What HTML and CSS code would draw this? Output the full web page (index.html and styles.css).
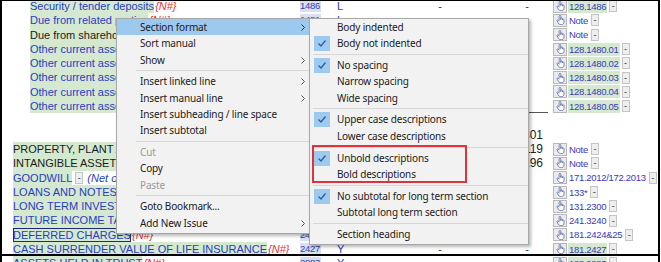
FILE: index.html
```html
<!DOCTYPE html>
<html>
<head>
<meta charset="utf-8">
<link rel="stylesheet" href="styles.css">
</head>
<body>
<div class="frame">
  <div class="sheet">
    <div class="row sub">
      <div class="desc"><span class="lbl">Security / tender deposits</span><span class="nf">{N#}</span></div>
      <div class="code"><span class="cd">1486</span></div>
      <div class="type">L</div>
      <div class="d1">-</div>
      <div class="amt"><span class="dash">-</span></div>
      <div class="ref"><span class="hb"><svg viewBox="0 0 10 11" width="9" height="10"><path d="M3.5 6V1.3a.9.9 0 0 1 1.8 0V5M5.3 5V4.2a.9.9 0 0 1 1.8 0V5.5M7.1 5.3a.9.9 0 0 1 1.8 0V8c0 1.6-1.2 2.6-2.8 2.6H5.2c-1.2 0-2-.6-2.6-1.6L1.2 6.6a.8.8 0 0 1 1.3-.9L3.5 7" fill="#fff" stroke="#5566aa" stroke-width=".9"/></svg></span><span class="rl g">128.1486</span><span class="dd">-</span></div>
    </div>
    <div class="row sub">
      <div class="desc"><span class="lbl">Due from related parties</span><span class="nf">{N#}</span></div>
      <div class="code"><span class="cd">1481</span></div><div class="type">L</div><div class="d1">-</div><div class="amt"></div>
      <div class="ref"><span class="hb"><svg viewBox="0 0 10 11" width="9" height="10"><path d="M3.5 6V1.3a.9.9 0 0 1 1.8 0V5M5.3 5V4.2a.9.9 0 0 1 1.8 0V5.5M7.1 5.3a.9.9 0 0 1 1.8 0V8c0 1.6-1.2 2.6-2.8 2.6H5.2c-1.2 0-2-.6-2.6-1.6L1.2 6.6a.8.8 0 0 1 1.3-.9L3.5 7" fill="#fff" stroke="#5566aa" stroke-width=".9"/></svg></span><span class="rl">Note</span><span class="dd">-</span></div>
    </div>
    <div class="row sub dark">
      <div class="desc"><span class="lbl">Due from shareholders</span></div>
      <div class="code"></div><div class="type"></div><div class="d1"></div><div class="amt"></div>
      <div class="ref"><span class="hb"><svg viewBox="0 0 10 11" width="9" height="10"><path d="M3.5 6V1.3a.9.9 0 0 1 1.8 0V5M5.3 5V4.2a.9.9 0 0 1 1.8 0V5.5M7.1 5.3a.9.9 0 0 1 1.8 0V8c0 1.6-1.2 2.6-2.8 2.6H5.2c-1.2 0-2-.6-2.6-1.6L1.2 6.6a.8.8 0 0 1 1.3-.9L3.5 7" fill="#fff" stroke="#5566aa" stroke-width=".9"/></svg></span><span class="rl">Note</span><span class="dd">-</span></div>
    </div>
    <div class="row sub">
      <div class="desc"><span class="lbl">Other current assets - deposits</span></div>
      <div class="code"></div><div class="type"></div><div class="d1"></div><div class="amt"></div>
      <div class="ref"><span class="hb"><svg viewBox="0 0 10 11" width="9" height="10"><path d="M3.5 6V1.3a.9.9 0 0 1 1.8 0V5M5.3 5V4.2a.9.9 0 0 1 1.8 0V5.5M7.1 5.3a.9.9 0 0 1 1.8 0V8c0 1.6-1.2 2.6-2.8 2.6H5.2c-1.2 0-2-.6-2.6-1.6L1.2 6.6a.8.8 0 0 1 1.3-.9L3.5 7" fill="#fff" stroke="#5566aa" stroke-width=".9"/></svg></span><span class="rl g">128.1480.01</span><span class="dd">-</span></div>
    </div>
    <div class="row sub">
      <div class="desc"><span class="lbl">Other current assets - advances</span></div>
      <div class="code"></div><div class="type"></div><div class="d1"></div><div class="amt"></div>
      <div class="ref"><span class="hb"><svg viewBox="0 0 10 11" width="9" height="10"><path d="M3.5 6V1.3a.9.9 0 0 1 1.8 0V5M5.3 5V4.2a.9.9 0 0 1 1.8 0V5.5M7.1 5.3a.9.9 0 0 1 1.8 0V8c0 1.6-1.2 2.6-2.8 2.6H5.2c-1.2 0-2-.6-2.6-1.6L1.2 6.6a.8.8 0 0 1 1.3-.9L3.5 7" fill="#fff" stroke="#5566aa" stroke-width=".9"/></svg></span><span class="rl g">128.1480.02</span><span class="dd">-</span></div>
    </div>
    <div class="row sub">
      <div class="desc"><span class="lbl">Other current assets - prepaid</span></div>
      <div class="code"></div><div class="type"></div><div class="d1"></div><div class="amt"></div>
      <div class="ref"><span class="hb"><svg viewBox="0 0 10 11" width="9" height="10"><path d="M3.5 6V1.3a.9.9 0 0 1 1.8 0V5M5.3 5V4.2a.9.9 0 0 1 1.8 0V5.5M7.1 5.3a.9.9 0 0 1 1.8 0V8c0 1.6-1.2 2.6-2.8 2.6H5.2c-1.2 0-2-.6-2.6-1.6L1.2 6.6a.8.8 0 0 1 1.3-.9L3.5 7" fill="#fff" stroke="#5566aa" stroke-width=".9"/></svg></span><span class="rl g">128.1480.03</span><span class="dd">-</span></div>
    </div>
    <div class="row sub">
      <div class="desc"><span class="lbl">Other current assets - other</span></div>
      <div class="code"></div><div class="type"></div><div class="d1"></div><div class="amt"></div>
      <div class="ref"><span class="hb"><svg viewBox="0 0 10 11" width="9" height="10"><path d="M3.5 6V1.3a.9.9 0 0 1 1.8 0V5M5.3 5V4.2a.9.9 0 0 1 1.8 0V5.5M7.1 5.3a.9.9 0 0 1 1.8 0V8c0 1.6-1.2 2.6-2.8 2.6H5.2c-1.2 0-2-.6-2.6-1.6L1.2 6.6a.8.8 0 0 1 1.3-.9L3.5 7" fill="#fff" stroke="#5566aa" stroke-width=".9"/></svg></span><span class="rl g">128.1480.04</span><span class="dd">-</span></div>
    </div>
    <div class="row sub">
      <div class="desc"><span class="lbl">Other current assets - misc</span></div>
      <div class="code"></div><div class="type"></div><div class="d1"></div><div class="amt rule"></div>
      <div class="ref"><span class="hb"><svg viewBox="0 0 10 11" width="9" height="10"><path d="M3.5 6V1.3a.9.9 0 0 1 1.8 0V5M5.3 5V4.2a.9.9 0 0 1 1.8 0V5.5M7.1 5.3a.9.9 0 0 1 1.8 0V8c0 1.6-1.2 2.6-2.8 2.6H5.2c-1.2 0-2-.6-2.6-1.6L1.2 6.6a.8.8 0 0 1 1.3-.9L3.5 7" fill="#fff" stroke="#5566aa" stroke-width=".9"/></svg></span><span class="rl g">128.1480.05</span><span class="dd">-</span></div>
    </div>
    <div class="row"><div class="desc"></div><div class="code"></div><div class="type"></div><div class="d1"></div><div class="amt"></div><div class="ref"></div></div>
    <div class="row">
      <div class="desc"></div><div class="code"></div><div class="type"></div><div class="d1"></div>
      <div class="amt">7,545,301</div><div class="ref"></div>
    </div>
    <div class="row dark">
      <div class="desc"><span class="lbl">PROPERTY, PLANT AND EQUIPMENT</span></div>
      <div class="code"></div><div class="type"></div><div class="d1"></div><div class="amt">2,166,119</div>
      <div class="ref"><span class="hb"><svg viewBox="0 0 10 11" width="9" height="10"><path d="M3.5 6V1.3a.9.9 0 0 1 1.8 0V5M5.3 5V4.2a.9.9 0 0 1 1.8 0V5.5M7.1 5.3a.9.9 0 0 1 1.8 0V8c0 1.6-1.2 2.6-2.8 2.6H5.2c-1.2 0-2-.6-2.6-1.6L1.2 6.6a.8.8 0 0 1 1.3-.9L3.5 7" fill="#fff" stroke="#5566aa" stroke-width=".9"/></svg></span><span class="rl">Note</span><span class="dd">-</span></div>
    </div>
    <div class="row dark">
      <div class="desc"><span class="lbl">INTANGIBLE ASSETS</span></div>
      <div class="code"></div><div class="type"></div><div class="d1"></div><div class="amt">1,330,196</div>
      <div class="ref"><span class="hb"><svg viewBox="0 0 10 11" width="9" height="10"><path d="M3.5 6V1.3a.9.9 0 0 1 1.8 0V5M5.3 5V4.2a.9.9 0 0 1 1.8 0V5.5M7.1 5.3a.9.9 0 0 1 1.8 0V8c0 1.6-1.2 2.6-2.8 2.6H5.2c-1.2 0-2-.6-2.6-1.6L1.2 6.6a.8.8 0 0 1 1.3-.9L3.5 7" fill="#fff" stroke="#5566aa" stroke-width=".9"/></svg></span><span class="rl">Note</span><span class="dd">-</span></div>
    </div>
    <div class="row">
      <div class="desc"><span class="lbl">GOODWILL</span><span class="dd inl">-</span><span class="it">(Net of amortization)</span></div>
      <div class="code"></div><div class="type"></div><div class="d1"></div><div class="amt"></div>
      <div class="ref"><span class="hb"><svg viewBox="0 0 10 11" width="9" height="10"><path d="M3.5 6V1.3a.9.9 0 0 1 1.8 0V5M5.3 5V4.2a.9.9 0 0 1 1.8 0V5.5M7.1 5.3a.9.9 0 0 1 1.8 0V8c0 1.6-1.2 2.6-2.8 2.6H5.2c-1.2 0-2-.6-2.6-1.6L1.2 6.6a.8.8 0 0 1 1.3-.9L3.5 7" fill="#fff" stroke="#5566aa" stroke-width=".9"/></svg></span><span class="rl">171.2012/172.2013</span><span class="dd">-</span></div>
    </div>
    <div class="row">
      <div class="desc"><span class="lbl">LOANS AND NOTES RECEIVABLE</span></div>
      <div class="code"></div><div class="type"></div><div class="d1"></div><div class="amt"></div>
      <div class="ref"><span class="hb"><svg viewBox="0 0 10 11" width="9" height="10"><path d="M3.5 6V1.3a.9.9 0 0 1 1.8 0V5M5.3 5V4.2a.9.9 0 0 1 1.8 0V5.5M7.1 5.3a.9.9 0 0 1 1.8 0V8c0 1.6-1.2 2.6-2.8 2.6H5.2c-1.2 0-2-.6-2.6-1.6L1.2 6.6a.8.8 0 0 1 1.3-.9L3.5 7" fill="#fff" stroke="#5566aa" stroke-width=".9"/></svg></span><span class="rl">133*</span><span class="dd">-</span></div>
    </div>
    <div class="row">
      <div class="desc"><span class="lbl">LONG TERM INVESTMENTS</span></div>
      <div class="code"></div><div class="type"></div><div class="d1"></div><div class="amt"></div>
      <div class="ref"><span class="hb"><svg viewBox="0 0 10 11" width="9" height="10"><path d="M3.5 6V1.3a.9.9 0 0 1 1.8 0V5M5.3 5V4.2a.9.9 0 0 1 1.8 0V5.5M7.1 5.3a.9.9 0 0 1 1.8 0V8c0 1.6-1.2 2.6-2.8 2.6H5.2c-1.2 0-2-.6-2.6-1.6L1.2 6.6a.8.8 0 0 1 1.3-.9L3.5 7" fill="#fff" stroke="#5566aa" stroke-width=".9"/></svg></span><span class="rl">131.2300</span><span class="dd">-</span></div>
    </div>
    <div class="row">
      <div class="desc"><span class="lbl">FUTURE INCOME TAXES</span></div>
      <div class="code"></div><div class="type"></div><div class="d1"></div><div class="amt"></div>
      <div class="ref"><span class="hb"><svg viewBox="0 0 10 11" width="9" height="10"><path d="M3.5 6V1.3a.9.9 0 0 1 1.8 0V5M5.3 5V4.2a.9.9 0 0 1 1.8 0V5.5M7.1 5.3a.9.9 0 0 1 1.8 0V8c0 1.6-1.2 2.6-2.8 2.6H5.2c-1.2 0-2-.6-2.6-1.6L1.2 6.6a.8.8 0 0 1 1.3-.9L3.5 7" fill="#fff" stroke="#5566aa" stroke-width=".9"/></svg></span><span class="rl">241.3240</span><span class="dd">-</span></div>
    </div>
    <div class="row">
      <div class="desc"><span class="lbl boxed">DEFERRED CHARGES</span><span class="nf">{N#}</span></div>
      <div class="code"><span class="cd">2424</span></div><div class="type">Y</div><div class="d1">-</div><div class="amt"><span class="dash">-</span></div>
      <div class="ref"><span class="hb"><svg viewBox="0 0 10 11" width="9" height="10"><path d="M3.5 6V1.3a.9.9 0 0 1 1.8 0V5M5.3 5V4.2a.9.9 0 0 1 1.8 0V5.5M7.1 5.3a.9.9 0 0 1 1.8 0V8c0 1.6-1.2 2.6-2.8 2.6H5.2c-1.2 0-2-.6-2.6-1.6L1.2 6.6a.8.8 0 0 1 1.3-.9L3.5 7" fill="#fff" stroke="#5566aa" stroke-width=".9"/></svg></span><span class="rl">181.2424&amp;25</span><span class="dd">-</span></div>
    </div>
    <div class="row">
      <div class="desc"><span class="lbl">CASH SURRENDER VALUE OF LIFE INSURANCE</span><span class="nf">{N#}</span></div>
      <div class="code"><span class="cd">2427</span></div><div class="type">Y</div><div class="d1">-</div><div class="amt"><span class="dash">-</span></div>
      <div class="ref"><span class="hb"><svg viewBox="0 0 10 11" width="9" height="10"><path d="M3.5 6V1.3a.9.9 0 0 1 1.8 0V5M5.3 5V4.2a.9.9 0 0 1 1.8 0V5.5M7.1 5.3a.9.9 0 0 1 1.8 0V8c0 1.6-1.2 2.6-2.8 2.6H5.2c-1.2 0-2-.6-2.6-1.6L1.2 6.6a.8.8 0 0 1 1.3-.9L3.5 7" fill="#fff" stroke="#5566aa" stroke-width=".9"/></svg></span><span class="rl g">181.2427</span><span class="dd">-</span></div>
    </div>
    <div class="row">
      <div class="desc"><span class="lbl">ASSETS HELD IN TRUST</span><span class="nf">{N#}</span></div>
      <div class="code"><span class="cd">2883</span></div><div class="type">Y</div><div class="d1">-</div><div class="amt"><span class="dash">-</span></div>
      <div class="ref"><span class="hb"><svg viewBox="0 0 10 11" width="9" height="10"><path d="M3.5 6V1.3a.9.9 0 0 1 1.8 0V5M5.3 5V4.2a.9.9 0 0 1 1.8 0V5.5M7.1 5.3a.9.9 0 0 1 1.8 0V8c0 1.6-1.2 2.6-2.8 2.6H5.2c-1.2 0-2-.6-2.6-1.6L1.2 6.6a.8.8 0 0 1 1.3-.9L3.5 7" fill="#fff" stroke="#5566aa" stroke-width=".9"/></svg></span><span class="rl g">188.2883</span><span class="dd">-</span></div>
    </div>
  </div>

  <div class="menu main-menu">
    <div class="item hot">Section format<span class="arrow"><svg viewBox="0 0 4 7" width="4" height="7"><path d="M.5.5 3.5 3.5.5 6.5" fill="none" stroke="#333" stroke-width="1"/></svg></span></div>
    <div class="item">Sort manual</div>
    <div class="item">Show<span class="arrow"><svg viewBox="0 0 4 7" width="4" height="7"><path d="M.5.5 3.5 3.5.5 6.5" fill="none" stroke="#555" stroke-width="1"/></svg></span></div>
    <div class="sep"></div>
    <div class="item">Insert linked line<span class="arrow"><svg viewBox="0 0 4 7" width="4" height="7"><path d="M.5.5 3.5 3.5.5 6.5" fill="none" stroke="#555" stroke-width="1"/></svg></span></div>
    <div class="item">Insert manual line<span class="arrow"><svg viewBox="0 0 4 7" width="4" height="7"><path d="M.5.5 3.5 3.5.5 6.5" fill="none" stroke="#555" stroke-width="1"/></svg></span></div>
    <div class="item">Insert subheading / line space</div>
    <div class="item">Insert subtotal</div>
    <div class="sep"></div>
    <div class="item off">Cut</div>
    <div class="item">Copy</div>
    <div class="item off">Paste</div>
    <div class="sep"></div>
    <div class="item">Goto Bookmark...</div>
    <div class="item">Add New Issue<span class="arrow"><svg viewBox="0 0 4 7" width="4" height="7"><path d="M.5.5 3.5 3.5.5 6.5" fill="none" stroke="#555" stroke-width="1"/></svg></span></div>
  </div>

  <div class="menu sub-menu">
    <div class="item">Body indented</div>
    <div class="item"><span class="chk"><svg viewBox="0 0 16 15" width="16" height="15"><path d="M4.5 7.5 7 10 11.5 4.5" fill="none" stroke="#2b5c9c" stroke-width="1.3"/></svg></span>Body not indented</div>
    <div class="sep"></div>
    <div class="item"><span class="chk"><svg viewBox="0 0 16 15" width="16" height="15"><path d="M4.5 7.5 7 10 11.5 4.5" fill="none" stroke="#2b5c9c" stroke-width="1.3"/></svg></span>No spacing</div>
    <div class="item">Narrow spacing</div>
    <div class="item">Wide spacing</div>
    <div class="sep"></div>
    <div class="item"><span class="chk"><svg viewBox="0 0 16 15" width="16" height="15"><path d="M4.5 7.5 7 10 11.5 4.5" fill="none" stroke="#2b5c9c" stroke-width="1.3"/></svg></span>Upper case descriptions</div>
    <div class="item">Lower case descriptions</div>
    <div class="sep"></div>
    <div class="item"><span class="chk"><svg viewBox="0 0 16 15" width="16" height="15"><path d="M4.5 7.5 7 10 11.5 4.5" fill="none" stroke="#2b5c9c" stroke-width="1.3"/></svg></span>Unbold descriptions</div>
    <div class="item">Bold descriptions</div>
    <div class="sep"></div>
    <div class="item"><span class="chk"><svg viewBox="0 0 16 15" width="16" height="15"><path d="M4.5 7.5 7 10 11.5 4.5" fill="none" stroke="#2b5c9c" stroke-width="1.3"/></svg></span>No subtotal for long term section</div>
    <div class="item">Subtotal long term section</div>
    <div class="sep"></div>
    <div class="item">Section heading</div>
  </div>

  <div class="redbox"></div>
</div>
</body>
</html>
```

FILE: styles.css
```css
* { box-sizing: border-box; }
html, body { margin: 0; padding: 0; background: #fff; }

.frame {
  position: relative;
  width: 660px;
  height: 262px;
  border-style: solid;
  border-color: #000;
  border-width: 1px 2px 0 2px;
  overflow: hidden;
  background: #fff;
}
.frame::after {
  content: "";
  position: absolute;
  left: 0; right: 0;
  top: 253px;
  height: 2px;
  background: #000;
}

.sheet {
  margin-top: -2px;
  font-family: "Liberation Sans", Arial, sans-serif;
  font-size: 11px;
  color: #2a3cc4;
}

.row {
  display: grid;
  grid-template-columns: 296px 37px 90px 30px 93px 1fr;
  height: 14.3px;
  line-height: 14.3px;
  white-space: nowrap;
}
.row > div { display: flex; align-items: center; height: 14.3px; overflow: visible; }

.desc { padding-left: 11px; }
.sub .desc { padding-left: 28px; }
.lbl { background: #d4e9d0; height: 14.3px; line-height: 14.3px; display: inline-block; }
.dark .lbl { color: #1a1a1a; }
.nf { color: #e53030; font-style: italic; font-size: 11px; padding-left: 1px; }
.it { font-style: italic; padding-left: 4px; }
.boxed { outline: 1px solid #1c2a80; outline-offset: -1px; }

.code { padding-left: 2px; }
.cd {
  font-family: "Liberation Sans", Arial, sans-serif;
  font-size: 9.5px;
  letter-spacing: -0.3px;
  background: #dadef2;
  color: #3344aa;
  line-height: 12px;
  padding: 0 1px 0 0;
}
.type { padding-left: 2px; }
.d1 { justify-content: center; color: #333; }
.amt { justify-content: flex-end; padding-right: 5px; color: #222; font-size: 12px; }
.amt .dash { padding-right: 14px; color: #333; font-size: 11px; }
.amt.rule { border-bottom: 1px solid #555; }

.ref { padding-left: 5px; gap: 1px; }
.hb {
  display: inline-flex; align-items: center; justify-content: center;
  width: 14px; height: 13px;
  border: 1px solid #b8b8b8; background: #ebebeb;
}
.rl {
  font-family: "Liberation Sans", Arial, sans-serif;
  font-size: 9.5px;
  letter-spacing: -0.3px;
  color: #3a3ab8;
  line-height: 13px;
  padding: 0 1px;
}
.rl.g { background: #d4e9d0; }
.dd {
  display: inline-flex; align-items: center; justify-content: center;
  width: 8px; height: 12px;
  border: 1px solid #c4c4c4; background: #eeeeee;
  color: #333; font-size: 9px; line-height: 10px;
  margin-left: 1px;
}
.dd.inl { margin-left: 3px; }

/* context menus (overlays) */
.menu {
  position: absolute;
  background: #f2f2f2;
  border: 1px solid #a8a8a8;
  box-shadow: 2px 2px 3px rgba(0,0,0,0.28);
  font-family: "Noto Sans", sans-serif;
  font-size: 10px;
  letter-spacing: -0.15px;
  color: #1a1a1a;
  padding: 0 0 2px;
}
.main-menu { left: 114px; top: 17px; width: 197px; }
.sub-menu { left: 307px; top: 17px; width: 220px; }

.item {
  position: relative;
  height: 16.3px;
  line-height: 16.3px;
  white-space: nowrap;
  display: flex;
  align-items: center;
}
.main-menu .item { padding-left: 23px; }
.sub-menu .item { padding-left: 27px; }
.item.hot { background: #9dc9ef; }
.item.off { color: #9a9a9a; }
.arrow { position: absolute; right: 7px; top: 5px; height: 7px; display: flex; }
.sep { height: 5.5px; border-bottom: 1px solid #d7d7d7; transform: translateY(-2px); }
.main-menu .sep { margin-left: 19px; }
.sub-menu .sep { margin-left: 3px; }

.chk {
  position: absolute;
  left: 4px; top: 1px;
  width: 16px; height: 15px;
  background: #9fcaf0;
  display: flex;
}

.redbox {
  position: absolute;
  left: 310px; top: 144px;
  width: 155px; height: 38px;
  border: 2px solid #e0323a;
}
```
